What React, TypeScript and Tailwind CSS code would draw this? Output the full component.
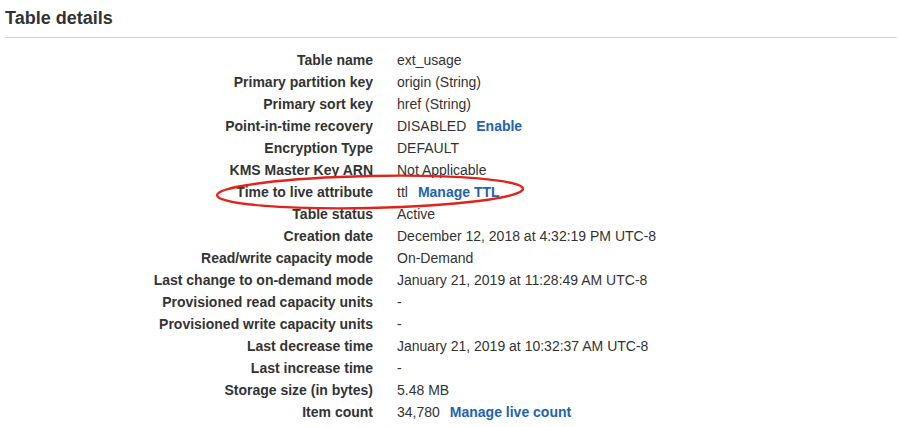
const rows: { label: string; value: string; link?: string }[] = [
  { label: "Table name", value: "ext_usage" },
  { label: "Primary partition key", value: "origin (String)" },
  { label: "Primary sort key", value: "href (String)" },
  { label: "Point-in-time recovery", value: "DISABLED", link: "Enable" },
  { label: "Encryption Type", value: "DEFAULT" },
  { label: "KMS Master Key ARN", value: "Not Applicable" },
  { label: "Time to live attribute", value: "ttl", link: "Manage TTL" },
  { label: "Table status", value: "Active" },
  { label: "Creation date", value: "December 12, 2018 at 4:32:19 PM UTC-8" },
  { label: "Read/write capacity mode", value: "On-Demand" },
  { label: "Last change to on-demand mode", value: "January 21, 2019 at 11:28:49 AM UTC-8" },
  { label: "Provisioned read capacity units", value: "-" },
  { label: "Provisioned write capacity units", value: "-" },
  { label: "Last decrease time", value: "January 21, 2019 at 10:32:37 AM UTC-8" },
  { label: "Last increase time", value: "-" },
  { label: "Storage size (in bytes)", value: "5.48 MB" },
  { label: "Item count", value: "34,780", link: "Manage live count" },
];

export default function App() {
  return (
    <div className="w-[898px] h-[427px] bg-white text-[#333] font-['Liberation_Sans',Arial,sans-serif] overflow-hidden">
      <div className="pl-[5px] pt-[6px]">
        <h2 className="text-[18px] leading-[24px] font-bold text-[#333]">Table details</h2>
        <div className="mt-[7px] h-px bg-[#d5d5d5] w-[892px]" />
      </div>

      <div className="relative mt-[11px]">
        {/* red hand-drawn ellipse around the TTL row */}
        <svg className="absolute left-0 top-0 pointer-events-none" width="898" height="400">
          <ellipse
            cx="370"
            cy="143"
            rx="153"
            ry="16"
            fill="none"
            stroke="#e3231b"
            strokeWidth="2.4"
            transform="rotate(-1.2 370 143)"
          />
        </svg>

        <div className="flex flex-col">
          {rows.map((r) => (
            <div key={r.label} className="flex h-[22px] items-center text-[14px]">
              <div className="w-[373px] text-right font-bold">{r.label}</div>
              <div className="pl-[24px] whitespace-nowrap">
                {r.value}
                {r.link && (
                  <span className="ml-[10px] font-bold text-[#1e63b0]">{r.link}</span>
                )}
              </div>
            </div>
          ))}
        </div>
      </div>
    </div>
  );
}
